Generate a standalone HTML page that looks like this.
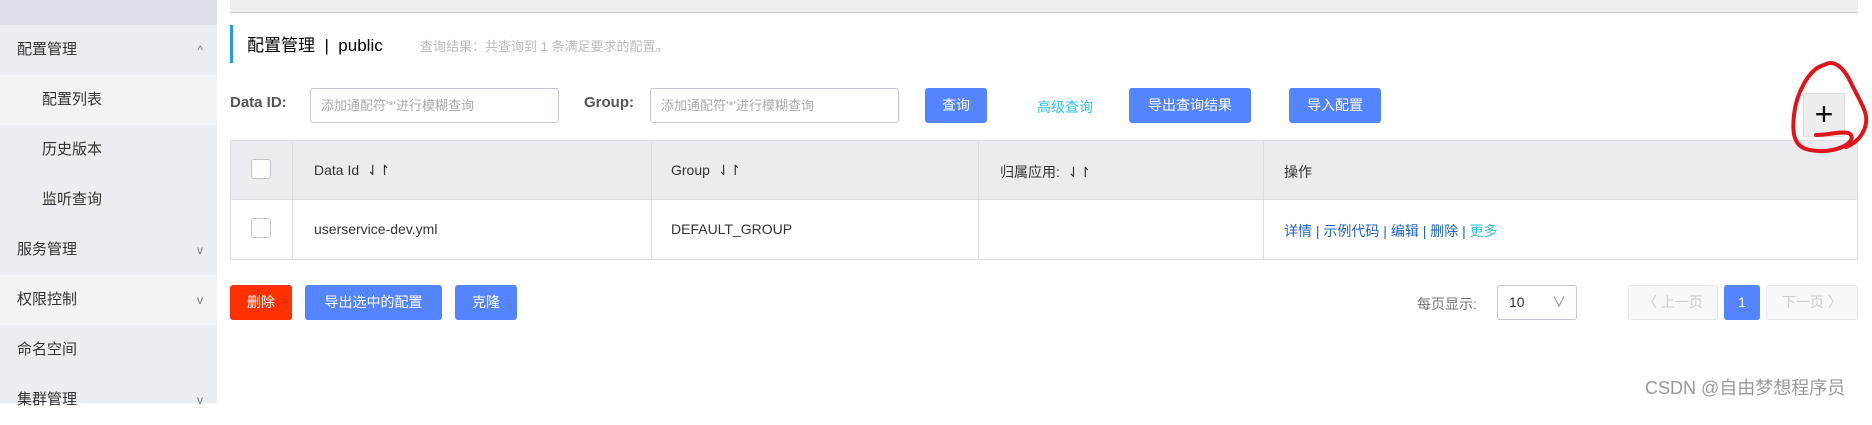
<!DOCTYPE html><html><head><meta charset="utf-8"><style>
*{margin:0;padding:0;box-sizing:border-box}
body{width:1872px;height:403px;overflow:hidden;background:#fff;font-family:"Liberation Sans","Noto Sans CJK SC",sans-serif;position:relative;color:#333}
.a{position:absolute}
.side{left:0;top:0;width:217px;height:403px;background:#eaedf1}
.si{position:absolute;left:0;width:217px;height:50px;line-height:50px;font-size:15px;color:#333;padding-left:17px}
.sub{padding-left:42px}
.chev{position:absolute;right:14px;top:0;font-size:12px;color:#777}
.btn{position:absolute;height:35px;line-height:35px;text-align:center;color:#fff;font-size:14px;border-radius:3px;background:#5584ff}
.inp{position:absolute;height:35px;border:1px solid #c4c6cf;border-radius:3px;font-size:13px;color:#aaa;line-height:33px;padding-left:10px}
.cb{position:absolute;width:20px;height:20px;border:1px solid #c4c6cf;border-radius:3px;background:#fff}
.t{position:absolute;font-size:14px;color:#333}
</style></head><body>
<div class="a side">
<div class="a" style="left:0;top:0;width:217px;height:25px;background:#dcdfe6"></div>
<div class="si" style="top:25px">配置管理<span class="chev">^</span></div>
<div class="si sub" style="top:75px;background:#f2f3f5">配置列表</div>
<div class="si sub" style="top:125px">历史版本</div>
<div class="si sub" style="top:175px">监听查询</div>
<div class="si" style="top:225px">服务管理<span class="chev">v</span></div>
<div class="si" style="top:275px;background:#f2f3f5">权限控制<span class="chev">v</span></div>
<div class="si" style="top:325px">命名空间</div>
<div class="si" style="top:375px">集群管理<span class="chev">v</span></div>
</div>
<div class="a" style="left:230px;top:0;width:1628px;height:13px;background:#eeeeee;border-bottom:1px solid #ccc"></div>
<div class="a" style="left:230px;top:25px;width:3px;height:38px;background:#209bfa"></div>
<div class="a" style="left:247px;top:31px;font-size:17px;color:#000">配置管理 &nbsp;| &nbsp;public</div>
<div class="a" style="left:420px;top:36px;font-size:13px;color:#bbb">查询结果：共查询到 1 条满足要求的配置。</div>
<div class="a" style="left:230px;top:94px;font-size:15px;font-weight:bold;color:#555">Data ID:</div>
<div class="inp" style="left:310px;top:88px;width:249px">添加通配符'*'进行模糊查询</div>
<div class="a" style="left:584px;top:94px;font-size:15px;font-weight:bold;color:#555">Group:</div>
<div class="inp" style="left:650px;top:88px;width:249px">添加通配符'*'进行模糊查询</div>
<div class="btn" style="left:925px;top:88px;width:62px">查询</div>
<div class="a" style="left:1037px;top:97px;font-size:14px;color:#2fc3de">高级查询</div>
<div class="btn" style="left:1129px;top:88px;width:122px">导出查询结果</div>
<div class="btn" style="left:1289px;top:88px;width:92px">导入配置</div>
<div class="a" style="left:1803px;top:93px;width:42px;height:44px;background:#ededed;border:1px solid #ddd;font-size:32px;line-height:40px;text-align:center;color:#111">+</div>
<div class="a" style="left:230px;top:140px;width:1628px;height:120px;border:1px solid #dcdee3"></div>
<div class="a" style="left:231px;top:141px;width:1626px;height:59px;background:#ebecf0;border-bottom:1px solid #dcdee3"></div>
<div class="a" style="left:292px;top:141px;width:1px;height:118px;background:#dcdee3"></div>
<div class="a" style="left:651px;top:141px;width:1px;height:118px;background:#dcdee3"></div>
<div class="a" style="left:978px;top:141px;width:1px;height:118px;background:#dcdee3"></div>
<div class="a" style="left:1263px;top:141px;width:1px;height:118px;background:#dcdee3"></div>
<div class="cb" style="left:251px;top:159px"></div>
<div class="cb" style="left:251px;top:218px"></div>
<div class="t" style="left:314px;top:162px">Data Id &nbsp;⇃↾</div>
<div class="t" style="left:671px;top:162px">Group &nbsp;⇃↾</div>
<div class="t" style="left:1000px;top:162px">归属应用: &nbsp;⇃↾</div>
<div class="t" style="left:1284px;top:162px">操作</div>
<div class="t" style="left:314px;top:221px">userservice-dev.yml</div>
<div class="t" style="left:671px;top:221px">DEFAULT_GROUP</div>
<div class="t" style="left:1284px;top:221px;color:#1c64c8">详情 | 示例代码 | 编辑 | 删除 | <span style="color:#2fc3de">更多</span></div>
<div class="btn" style="left:230px;top:285px;width:62px;background:#ff3000">删除</div>
<div class="btn" style="left:305px;top:285px;width:137px">导出选中的配置</div>
<div class="btn" style="left:455px;top:285px;width:62px">克隆</div>
<div class="a" style="left:1417px;top:294px;font-size:14px;color:#777">每页显示:</div>
<div class="a" style="left:1497px;top:285px;width:80px;height:35px;border:1px solid #c4c6cf;border-radius:3px;font-size:14px;line-height:33px;padding-left:11px;color:#333">10<span style="position:absolute;right:10px;color:#888">∨</span></div>
<div class="a" style="left:1628px;top:285px;width:90px;height:35px;border:1px solid #e6e7eb;background:#f7f8fa;border-radius:3px;color:#ccc;font-size:14px;line-height:33px;text-align:center">〈 上一页</div>
<div class="btn" style="left:1724px;top:285px;width:36px">1</div>
<div class="a" style="left:1766px;top:285px;width:92px;height:35px;border:1px solid #e6e7eb;background:#f7f8fa;border-radius:3px;color:#ccc;font-size:14px;line-height:33px;text-align:center">下一页 〉</div>
<div class="a" style="left:1645px;top:374px;font-size:18px;color:#999">CSDN @自由梦想程序员</div>
<svg class="a" style="left:1780px;top:55px" width="92" height="100"><path d="M44 10 C28 14 16 40 14 60 C12 78 14 90 26 94 C40 98 56 96 66 90 C72 86 74 80 68 78 C60 76 50 80 36 80 M44 10 C54 4 64 12 72 30 C80 46 88 58 86 68 C84 80 76 88 66 92" fill="none" stroke="#e0141a" stroke-width="4" stroke-linecap="round"/></svg>
</body></html>
